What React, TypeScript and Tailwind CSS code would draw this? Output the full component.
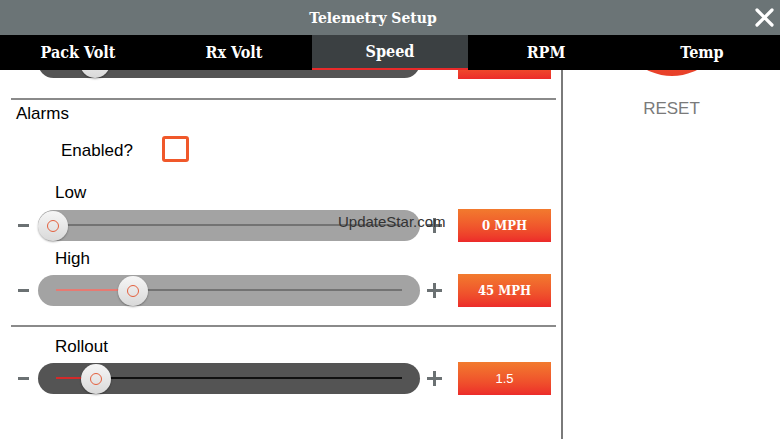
import React from "react";

const slab = { fontFamily: "'DejaVu Serif', serif", fontStretch: "condensed" as const };
const sans = { fontFamily: "'Liberation Sans', Arial, sans-serif" };

const tabs = ["Pack Volt", "Rx Volt", "Speed", "RPM", "Temp"];

type SliderProps = {
  thumb: number;
  dark?: boolean;
  value: string;
  serifValue?: boolean;
  fill?: string;
};

function Thumb() {
  return (
    <div className="flex h-[30px] w-[30px] items-center justify-center rounded-full bg-gradient-to-b from-[#f6f6f6] to-[#d9d9d9] shadow-[0_1px_2px_rgba(0,0,0,0.35)]">
      <div className="h-[12px] w-[12px] rounded-full border border-[#e4603e]" />
    </div>
  );
}

function SliderRow({ thumb, dark, value, serifValue = true, fill }: SliderProps) {
  return (
    <div className="flex items-center pl-[18px]">
      <div className="h-[3px] w-[11px] bg-[#6b7173]" />
      <div
        className={`relative ml-[9px] h-[31px] w-[382px] rounded-full ${dark ? "bg-[#545454]" : "bg-[#a3a3a3]"}`}
      >
        <div
          className={`absolute left-[18px] right-[18px] top-[14px] h-[2px] ${dark ? "bg-[#111]" : "bg-[#737373]"}`}
        />
        {fill ? (
          <div
            className="absolute left-[18px] top-[14px] h-[2px]"
            style={{ width: Math.max(0, thumb - 33), background: fill }}
          />
        ) : null}
        <div className="absolute top-[0.5px]" style={{ left: thumb - 15 }}>
          <Thumb />
        </div>
      </div>
      <div className="relative ml-[7px] h-[15px] w-[15px]">
        <div className="absolute left-0 top-[6px] h-[3px] w-[15px] bg-[#6b7173]" />
        <div className="absolute left-[6px] top-0 h-[15px] w-[3px] bg-[#6b7173]" />
      </div>
      <div
        className={`ml-[16px] flex h-[33px] w-[93px] items-center justify-center bg-gradient-to-b from-[#f27a2e] to-[#ec2a2a] text-[13px] text-white ${serifValue ? "font-bold" : "font-normal"}`}
        style={serifValue ? slab : sans}
      >
        {value}
      </div>
    </div>
  );
}

export default function App() {
  return (
    <div className="relative h-[439px] w-[780px] overflow-hidden bg-white" style={sans}>
      <div className="flex h-[35px] items-center bg-[#6b7476]">
        <div className="flex-1 text-center text-[15.5px] font-bold text-white" style={slab}>
          Telemetry Setup
        </div>
        <svg width="34" height="35" viewBox="0 0 34 35" className="shrink-0">
          <path d="M11 10 L26 25 M26 10 L11 25" stroke="white" strokeWidth="3.2" strokeLinecap="round" />
        </svg>
      </div>
      <div className="grid h-[35px] grid-cols-5 bg-black">
        {tabs.map((t) => (
          <div
            key={t}
            className={`flex items-center justify-center pt-[1px] text-[16px] font-bold text-white ${t === "Speed" ? "border-b-[2px] border-[#e82a2a] bg-[#3b4042]" : ""}`}
            style={slab}
          >
            {t}
          </div>
        ))}
      </div>
      <div className="flex h-[369px] overflow-hidden">
        <div className="w-[561px] shrink-0 text-[17px] leading-[20px] text-black">
          <div className="-mt-[24px]">
            <SliderRow thumb={57} dark value="" />
          </div>
          <div className="ml-[11px] mt-[19px] h-[2px] w-[545px] bg-[#8a8a8a]" />
          <div className="mt-[4px] pl-[16px]">Alarms</div>
          <div className="mt-[12px] flex items-center pl-[61px]">
            <div className="w-[101px] pt-[3px]">Enabled?</div>
            <div className="h-[26px] w-[27px] rounded-[3px] border-[3px] border-[#f0582a]" />
          </div>
          <div className="mt-[21px] pl-[55px]">Low</div>
          <div className="mt-[6px]">
            <SliderRow thumb={15} value="0 MPH" />
          </div>
          <div className="mt-[7px] pl-[55px]">High</div>
          <div className="mt-[5px]">
            <SliderRow thumb={95} value="45 MPH" fill="#e77a72" />
          </div>
          <div className="ml-[11px] mt-[18px] h-[2px] w-[545px] bg-[#8a8a8a]" />
          <div className="mt-[10px] pl-[55px]">Rollout</div>
          <div className="mt-[5px]">
            <SliderRow thumb={58} dark value="1.5" serifValue={false} fill="#d42a2a" />
          </div>
        </div>
        <div className="w-[2px] shrink-0 bg-[#7a7a7a]" />
        <div className="flex flex-1 flex-col items-center">
          <div className="-mt-[104px] h-[110px] w-[110px] shrink-0 rounded-full bg-gradient-to-b from-[#f26a30] to-[#e8402a]" />
          <div className="mt-[23px] text-[17px] leading-[20px] text-[#7a7a7a]">RESET</div>
        </div>
      </div>
      <div className="absolute left-[338px] top-[211px] text-[15px] text-[#333]" style={sans}>
        UpdateStar.com
      </div>
    </div>
  );
}
